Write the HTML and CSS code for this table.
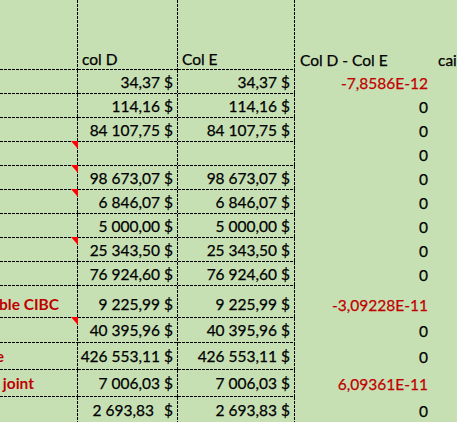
FILE: index.html
```html
<!DOCTYPE html>
<html lang="fr">
<head>
<meta charset="utf-8">
<title>Feuille</title>
<link rel="stylesheet" href="styles.css">
</head>
<body>
<div class="sheet">
  <div class="row rh">
    <div class="cell c"></div>
    <div class="cell d">col D</div>
    <div class="cell e">Col E</div>
    <div class="cell f">Col D - Col E</div>
    <div class="cell g">cai</div>
  </div>
  <div class="row r24">
    <div class="cell c"></div>
    <div class="cell d num">34,37&nbsp;$</div>
    <div class="cell e num">34,37&nbsp;$</div>
    <div class="cell f num red">-7,8586E-12</div>
    <div class="cell g"></div>
  </div>
  <div class="row r24">
    <div class="cell c"></div>
    <div class="cell d num">114,16&nbsp;$</div>
    <div class="cell e num">114,16&nbsp;$</div>
    <div class="cell f num">0</div>
    <div class="cell g"></div>
  </div>
  <div class="row r24">
    <div class="cell c"></div>
    <div class="cell d num">84&nbsp;107,75&nbsp;$</div>
    <div class="cell e num">84&nbsp;107,75&nbsp;$</div>
    <div class="cell f num">0</div>
    <div class="cell g"></div>
  </div>
  <div class="row r24">
    <div class="cell c note"></div>
    <div class="cell d num"></div>
    <div class="cell e num"></div>
    <div class="cell f num">0</div>
    <div class="cell g"></div>
  </div>
  <div class="row r24">
    <div class="cell c note"></div>
    <div class="cell d num">98&nbsp;673,07&nbsp;$</div>
    <div class="cell e num">98&nbsp;673,07&nbsp;$</div>
    <div class="cell f num">0</div>
    <div class="cell g"></div>
  </div>
  <div class="row r24">
    <div class="cell c note"></div>
    <div class="cell d num">6&nbsp;846,07&nbsp;$</div>
    <div class="cell e num">6&nbsp;846,07&nbsp;$</div>
    <div class="cell f num">0</div>
    <div class="cell g"></div>
  </div>
  <div class="row r24">
    <div class="cell c"></div>
    <div class="cell d num">5&nbsp;000,00&nbsp;$</div>
    <div class="cell e num">5&nbsp;000,00&nbsp;$</div>
    <div class="cell f num">0</div>
    <div class="cell g"></div>
  </div>
  <div class="row r24">
    <div class="cell c note"></div>
    <div class="cell d num">25&nbsp;343,50&nbsp;$</div>
    <div class="cell e num">25&nbsp;343,50&nbsp;$</div>
    <div class="cell f num">0</div>
    <div class="cell g"></div>
  </div>
  <div class="row r24">
    <div class="cell c"></div>
    <div class="cell d num">76&nbsp;924,60&nbsp;$</div>
    <div class="cell e num">76&nbsp;924,60&nbsp;$</div>
    <div class="cell f num">0</div>
    <div class="cell g"></div>
  </div>
  <div class="row r32">
    <div class="cell c label"><span class="lbl lbl-cibc">ble CIBC</span></div>
    <div class="cell d num">9&nbsp;225,99&nbsp;$</div>
    <div class="cell e num">9&nbsp;225,99&nbsp;$</div>
    <div class="cell f num red">-3,09228E-11</div>
    <div class="cell g"></div>
  </div>
  <div class="row r25">
    <div class="cell c note"></div>
    <div class="cell d num">40&nbsp;395,96&nbsp;$</div>
    <div class="cell e num">40&nbsp;395,96&nbsp;$</div>
    <div class="cell f num">0</div>
    <div class="cell g"></div>
  </div>
  <div class="row r27">
    <div class="cell c label"><span class="lbl lbl-e">e</span></div>
    <div class="cell d num">426&nbsp;553,11&nbsp;$</div>
    <div class="cell e num">426&nbsp;553,11&nbsp;$</div>
    <div class="cell f num">0</div>
    <div class="cell g"></div>
  </div>
  <div class="row r27">
    <div class="cell c label"><span class="lbl lbl-joint">joint</span></div>
    <div class="cell d num">7&nbsp;006,03&nbsp;$</div>
    <div class="cell e num">7&nbsp;006,03&nbsp;$</div>
    <div class="cell f num red">6,09361E-11</div>
    <div class="cell g"></div>
  </div>
  <div class="row r27">
    <div class="cell c"></div>
    <div class="cell d num">2&nbsp;693,83<span class="cur-gap">$</span></div>
    <div class="cell e num">2&nbsp;693,83&nbsp;$</div>
    <div class="cell f num">0</div>
    <div class="cell g"></div>
  </div>
</div>
</body>
</html>
```
FILE: styles.css
```css
html, body {
  margin: 0;
  padding: 0;
  background: #c6e0b4;
  overflow: hidden;
}

.sheet {
  display: grid;
  grid-template-columns: 78px 100px 117px 138px 1fr;
  grid-template-rows: 70px repeat(9, 24px) 32px 25px 27px 27px 27px;
  width: 457px;
  height: 422px;
  overflow: hidden;
  font-family: "Lato", "Liberation Sans", sans-serif;
  font-size: 15.5px;
  line-height: 18px;
  color: #000;
  -webkit-text-stroke: 0.25px currentColor;
}

.row {
  display: contents;
}

.cell {
  display: flex;
  align-items: flex-end;
  white-space: nowrap;
  padding: 0 4px;
  box-sizing: border-box;
  min-width: 0;
}

/* Excel-style thin dashed gridlines: 3px dash, 1px gap */
.c, .d, .e {
  border-right: 1px solid transparent;
  border-bottom: 1px solid transparent;
  background-image:
    repeating-linear-gradient(90deg, #000 0 3px, transparent 3px 4px),
    repeating-linear-gradient(180deg, #000 0 3px, transparent 3px 4px);
  background-size: 100% 1px, 1px 100%;
  background-position: left bottom, right top;
  background-repeat: no-repeat;
  background-origin: border-box;
}

.c {
  position: relative;
  padding: 0;
}

.num {
  justify-content: flex-end;
}

.f {
  padding-left: 5px;
}

.f.num {
  padding-right: 5px;
}

.g {
  padding-left: 5px;
}

.red {
  color: #c00000;
}

.rh > .cell { padding-bottom: 1px; }
.r24 > .cell { padding-bottom: 2px; }
.r32 > .cell { padding-bottom: 4px; }
.r25 > .cell { padding-bottom: 3px; }
.r27 > .cell { padding-bottom: 4px; }

.label {
  justify-content: flex-end;
}

.lbl {
  color: #c00000;
  font-weight: bold;
  -webkit-text-stroke: 0;
}

.lbl-cibc { margin-right: 18px; }
.lbl-e { margin-right: 73px; }
.lbl-joint { margin-right: 43px; }

.cur-gap {
  margin-left: 10px;
}

.note::after {
  content: "";
  position: absolute;
  top: -1px;
  right: -1px;
  width: 7px;
  height: 8px;
  background: #ff0000;
  clip-path: polygon(0 0, 100% 0, 100% 100%);
}
```
